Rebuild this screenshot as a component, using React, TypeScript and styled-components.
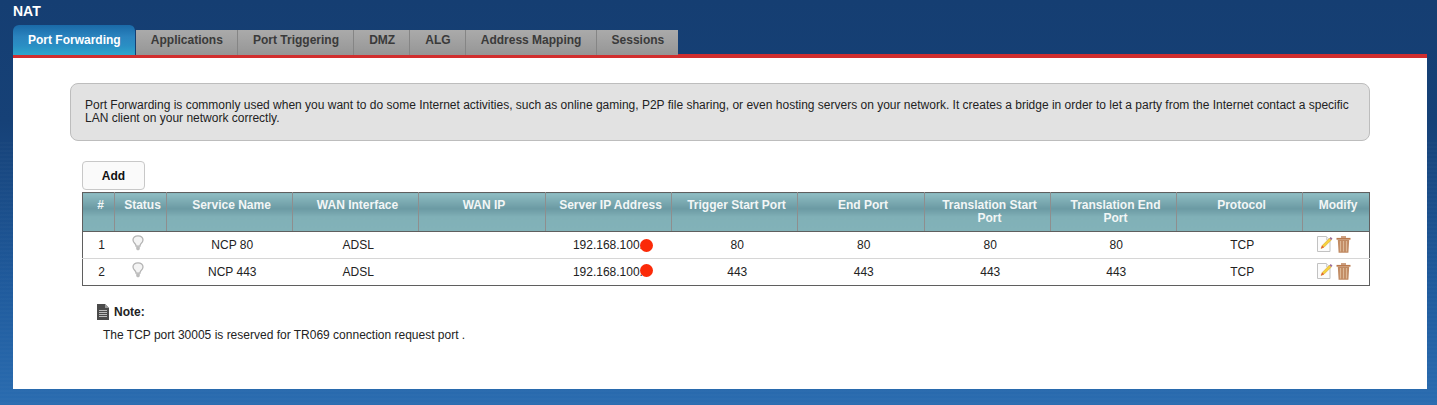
import React from "react";
import styled, { createGlobalStyle } from "styled-components";

const GlobalStyle = createGlobalStyle`
  html, body {
    margin: 0;
    padding: 0;
    height: 405px;
    overflow: hidden;
  }
  body {
    font-family: "Liberation Sans", Arial, sans-serif;
    font-size: 12px;
    color: #222;
    background: #2a6cb0;
  }
`;

const tabs = [
  "Port Forwarding",
  "Applications",
  "Port Triggering",
  "DMZ",
  "ALG",
  "Address Mapping",
  "Sessions",
];

const columns = [
  { title: "#", width: 32 },
  { title: "Status", width: 52 },
  { title: "Service Name", width: 126 },
  { title: "WAN Interface", width: 126 },
  { title: "WAN IP", width: 127 },
  { title: "Server IP Address", width: 126 },
  { title: "Trigger Start Port", width: 126 },
  { title: "End Port", width: 127 },
  { title: "Translation Start Port", width: 126 },
  { title: "Translation End Port", width: 126 },
  { title: "Protocol", width: 126 },
  { title: "Modify", width: 67 },
];

const rules = [
  { id: 1, name: "NCP 80", wan: "ADSL", ip: "192.168.100.2", start: 80, end: 80, tStart: 80, tEnd: 80, proto: "TCP" },
  { id: 2, name: "NCP 443", wan: "ADSL", ip: "192.168.100.2", start: 443, end: 443, tStart: 443, tEnd: 443, proto: "TCP" },
];

const BulbIcon = () => (
  <svg width="12" height="16" viewBox="0 0 12 16">
    <path d="M6 .8C3 .8 1 2.700 1 5c0 1.800 1.300 2.900 2.300 4.100.5.600.7 1.200.7 2h4c0-.8.200-1.400.7-2C10 7.900 11 6.800 11 5 11 2.700 9 .8 6 .8z" fill="#f4f4f4" stroke="#b4b4b4" strokeWidth="1.300" />
    <path d="M4.200 11.500h3.600v2.200c0 .8-.8 1.500-1.800 1.500s-1.800-.7-1.800-1.500z" fill="#bcbcbc" />
  </svg>
);

const EditIcon = () => (
  <svg width="16" height="16" viewBox="0 0 16 16">
    <path d="M.5.5h9l3.500 3.500v11.500H.5z" fill="#fbfbfb" stroke="#c2c2c2" />
    <path d="M9.500.5v3.500h3.500" fill="#eee" stroke="#d2d2d2" />
    <path d="M4 12.500l1.200-3 7.300-7.300 1.800 1.800-7.300 7.300z" fill="#f6d23c" stroke="#d39a26" strokeWidth=".5" />
    <path d="M4 12.500l1.200-3 1.800 1.800z" fill="#e2573c" />
    <path d="M12.500 2.200l1.200-1.200 1.800 1.800-1.200 1.200z" fill="#9a6a9a" />
  </svg>
);

const TrashIcon = () => (
  <svg width="15" height="17" viewBox="0 0 15 17">
    <path d="M5 1h5" stroke="#b9794e" strokeWidth="1.400" fill="none" />
    <path d="M.5 2.800h14" stroke="#b9794e" strokeWidth="1.800" fill="none" />
    <path d="M1.800 3.800h11.400l-.8 13H2.600z" fill="#c08a62" />
    <path d="M4.500 5v10.500M7.500 5v10.500M10.500 5v10.500" stroke="#dcb896" strokeWidth="1.200" />
  </svg>
);

const NoteIcon = () => (
  <svg width="12" height="16" viewBox="0 0 12 16">
    <path d="M0 0h8l4 4v12H0z" fill="#4a4a4a" />
    <path d="M8 0l4 4H8z" fill="#9a9a9a" />
    <path d="M2 6.500h8M2 8.500h8M2 10.500h8M2 12.500h8" stroke="#c8c8c8" strokeWidth=".9" />
  </svg>
);

const App = () => {
  return (
    <Page>
      <GlobalStyle />
      <Title>NAT</Title>
      <TabBar>
        {tabs.map((tab, i) => (
          <Tab key={tab} $active={i === 0}>
            {tab}
          </Tab>
        ))}
      </TabBar>
      <Content>
        <InfoBox>
          Port Forwarding is commonly used when you want to do some Internet activities, such as online gaming, P2P file
          sharing, or even hosting servers on your network. It creates a bridge in order to let a party from the Internet
          contact a specific LAN client on your network correctly.
        </InfoBox>
        <TableArea>
          <AddButton>Add</AddButton>
          <RuleTable>
            <colgroup>
              {columns.map((c) => (
                <col key={c.title} width={c.width} />
              ))}
            </colgroup>
            <thead>
              <tr>
                {columns.map((c) => (
                  <HeadCell key={c.title}>{c.title}</HeadCell>
                ))}
              </tr>
            </thead>
            <tbody>
              {rules.map((r) => (
                <Row key={r.id}>
                  <Cell>{r.id}</Cell>
                  <Cell>
                    <StatusLamp>
                      <BulbIcon />
                    </StatusLamp>
                  </Cell>
                  <Cell>{r.name}</Cell>
                  <Cell>{r.wan}</Cell>
                  <Cell />
                  <Cell>
                    <IpWrap>
                      {r.ip}
                      <RedDot $up={r.id === 2} />
                    </IpWrap>
                  </Cell>
                  <Cell>{r.start}</Cell>
                  <Cell>{r.end}</Cell>
                  <Cell>{r.tStart}</Cell>
                  <Cell>{r.tEnd}</Cell>
                  <Cell>{r.proto}</Cell>
                  <Cell>
                    <Actions>
                      <EditIcon />
                      <TrashIcon />
                    </Actions>
                  </Cell>
                </Row>
              ))}
            </tbody>
          </RuleTable>
        </TableArea>
        <NoteHead>
          <NoteIcon />
          <span>Note:</span>
        </NoteHead>
        <NoteText>The TCP port 30005 is reserved for TR069 connection request port .</NoteText>
      </Content>
    </Page>
  );
};

export default App;

const Page = styled.div`
  width: 1437px;
  height: 405px;
  box-sizing: border-box;
  padding: 0 10px 16px 13px;
  overflow: hidden;
  background:
    repeating-linear-gradient(to bottom, rgba(255, 255, 255, 0.015) 0 2px, transparent 2px 4px) bottom / 100% 65% no-repeat,
    linear-gradient(to bottom, #153e72 0%, #164177 30%, #1f5a9c 70%, #2a6cb0 100%);
`;

const Title = styled.div`
  height: 25px;
  line-height: 22px;
  font-size: 14px;
  font-weight: bold;
  color: #fff;
`;

const TabBar = styled.div`
  display: flex;
  align-items: flex-end;
  height: 29px;
  border-bottom: 4px solid #d12e2e;
`;

const Tab = styled.div<{ $active?: boolean }>`
  height: ${(p) => (p.$active ? "30px" : "25px")};
  line-height: ${(p) => (p.$active ? "30px" : "20px")};
  margin-bottom: -1px;
  padding: 0 14.15px 0 15px;
  font-weight: bold;
  color: ${(p) => (p.$active ? "#fff" : "#3a3a3a")};
  border-right: 1px solid ${(p) => (p.$active ? "#153e72" : "#858585")};
  border-radius: ${(p) => (p.$active ? "6px 6px 0 0" : "0")};
  background: ${(p) =>
    p.$active
      ? "linear-gradient(to bottom, #1a6aa8 0%, #2b84bf 40%, #2a8fc4 70%, #2ea6cc 100%)"
      : "linear-gradient(to bottom, #aaa 0%, #9c9c9c 70%, #959595 100%)"};
  &:last-child {
    border-right: 0;
  }
`;

const Content = styled.div`
  height: 331px;
  box-sizing: border-box;
  padding: 25px 57px 0;
  background: #fff;
`;

const InfoBox = styled.div`
  height: 58px;
  box-sizing: border-box;
  padding: 15px 14px 0;
  line-height: 13px;
  color: #222;
  background: #e2e2e2;
  border: 1px solid #bdbdbd;
  border-radius: 8px;
`;

const TableArea = styled.div`
  padding: 20px 0 0 12px;
`;

const AddButton = styled.button`
  display: block;
  width: 63px;
  height: 29px;
  margin: 0 0 2px;
  padding: 0;
  font-family: inherit;
  font-size: 12px;
  font-weight: bold;
  color: #111;
  background: #fafafa;
  border: 1px solid #c8c8c8;
  border-radius: 4px;
`;

const RuleTable = styled.table`
  width: 1287px;
  table-layout: fixed;
  border-collapse: collapse;
  border: 1px solid #5f5f5f;
`;

const HeadCell = styled.th`
  height: 39px;
  padding: 6px 2.5px 0 6.5px;
  box-sizing: border-box;
  vertical-align: top;
  font-size: 12px;
  line-height: 13px;
  font-weight: bold;
  color: #f2f6f6;
  background: linear-gradient(to bottom, #8fbdc3 0%, #6b9aa3 40%, #80b0b7 62%, #82b2b8 100%);
  border-right: 1px solid #8e8e8e;
  border-bottom: 1px solid #5f5f5f;
  &:last-child {
    border-right: 0;
  }
`;

const Row = styled.tr`
  height: 27px;
  & + & td {
    border-top: 1px solid #d6d6d6;
  }
`;

const Cell = styled.td`
  padding: 0 0 0 5.5px;
  text-align: center;
  vertical-align: middle;
  color: #222;
`;

const StatusLamp = styled.div`
  display: flex;
  justify-content: center;
  padding-right: 11px;
  margin-top: -4px;
`;

const IpWrap = styled.span`
  position: relative;
  display: inline-block;
`;

const RedDot = styled.i<{ $up?: boolean }>`
  position: absolute;
  right: -3.5px;
  top: ${(p) => (p.$up ? "-1px" : "1px")};
  width: 13px;
  height: 13px;
  border-radius: 50%;
  background: #fb2a08;
`;

const Actions = styled.div`
  display: flex;
  justify-content: center;
  gap: 3px;
  padding-right: 10px;
  margin-top: -1px;
`;

const NoteHead = styled.div`
  display: flex;
  align-items: center;
  gap: 5px;
  margin: 18px 0 0 27px;
  height: 16px;
  font-weight: bold;
  color: #222;
`;

const NoteText = styled.div`
  margin: 8px 0 0 33px;
  line-height: 14px;
  color: #222;
`;
